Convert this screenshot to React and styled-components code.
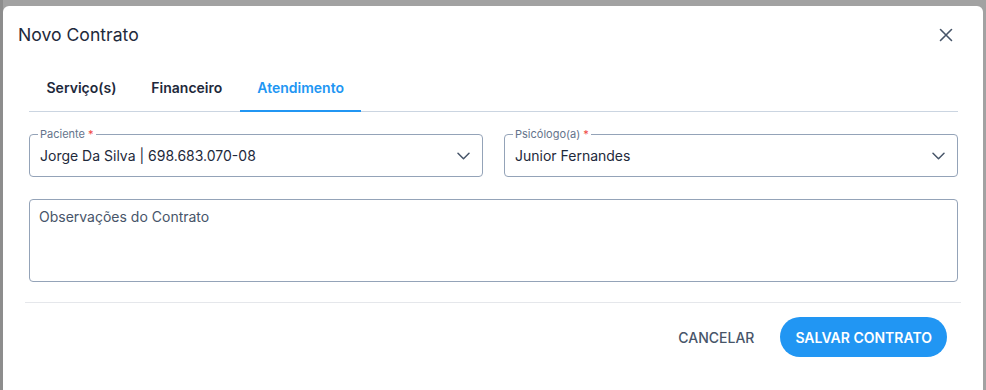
import React from 'react';
import styled, { createGlobalStyle } from 'styled-components';

const GlobalStyle = createGlobalStyle`
  * { box-sizing: border-box; }
  html, body {
    margin: 0;
    height: 100%;
    overflow: hidden;
  }
  body {
    font-family: Inter, "Noto Sans", sans-serif;
    background: linear-gradient(to right, #8d8d8d 0, #8d8d8d 3px, #a2a2a2 3px);
    -webkit-font-smoothing: antialiased;
  }
`;

const Backdrop = styled.div`
  height: 100vh;
  padding: 6px 3px 0 3px;
`;

const Modal = styled.div`
  background: #ffffff;
  border-radius: 6px 6px 0 0;
  height: 100%;
  display: flex;
  flex-direction: column;
`;

const Header = styled.div`
  display: flex;
  align-items: center;
  justify-content: space-between;
  padding: 16px 24px 0 15px;
`;

const Title = styled.h2`
  margin: 0;
  font-size: 17.6px;
  line-height: 26px;
  font-weight: 400;
  color: #1e293b;
`;

const CloseButton = styled.button`
  display: flex;
  align-items: center;
  justify-content: center;
  width: 26px;
  height: 26px;
  padding: 0;
  border: none;
  background: transparent;
  color: #475569;
  cursor: pointer;
`;

const Body = styled.div`
  padding: 0 25px 0 26px;
`;

const TabList = styled.div`
  display: flex;
  margin-top: 16px;
  border-bottom: 1px solid #cbd5e1;
`;

const Tab = styled.button`
  height: 48px;
  margin-bottom: -1px;
  padding: 0 17.5px;
  border: none;
  border-bottom: 2px solid ${props => (props.active ? '#2196f3' : 'transparent')};
  background: transparent;
  font-family: inherit;
  font-size: 14px;
  font-weight: 600;
  color: ${props => (props.active ? '#2196f3' : '#1e293b')};
  cursor: pointer;
`;

const FieldGrid = styled.div`
  display: grid;
  grid-template-columns: 1fr 1fr;
  gap: 21px;
  margin-top: 22px;
`;

const SelectBox = styled.div`
  position: relative;
  display: flex;
  align-items: center;
  justify-content: space-between;
  height: 43px;
  padding: 0 12px 0 10px;
  border: 1px solid #94a3b8;
  border-radius: 4px;
  color: #1e293b;
  font-size: 14px;
  cursor: pointer;
`;

const FloatingLabel = styled.span`
  position: absolute;
  top: -8px;
  left: 8px;
  padding: 0 2px;
  background: #ffffff;
  font-size: 11px;
  line-height: 14px;
  color: #64748b;
`;

const Required = styled.span`
  color: #ef4444;
`;

const Notes = styled.textarea`
  display: block;
  width: 100%;
  height: 83px;
  margin-top: 22px;
  padding: 8px 9px;
  border: 1px solid #94a3b8;
  border-radius: 4px;
  resize: none;
  font-family: inherit;
  font-size: 14px;
  line-height: 18px;
  color: #1e293b;

  &::placeholder {
    color: #475569;
  }
`;

const Divider = styled.hr`
  margin: 20px 22px 0 22px;
  border: none;
  border-top: 1px solid #e5e7eb;
`;

const Footer = styled.div`
  display: flex;
  justify-content: flex-end;
  align-items: center;
  gap: 10px;
  padding: 14px 36px 0 0;
`;

const TextButton = styled.button`
  height: 40px;
  padding: 0 16px;
  border: none;
  background: transparent;
  font-family: inherit;
  font-size: 14px;
  font-weight: 500;
  color: #475569;
  cursor: pointer;
`;

const PrimaryButton = styled.button`
  height: 40px;
  padding: 0 15px;
  border: none;
  border-radius: 20px;
  background: #2196f3;
  font-family: inherit;
  font-size: 14px;
  font-weight: 600;
  color: #ffffff;
  cursor: pointer;
`;

const XIcon = () => (
  <svg width="14" height="14" viewBox="0 0 14 14" fill="none" stroke="currentColor" strokeWidth="1.6" strokeLinecap="round">
    <path d="M1.5 1.5 L12.5 12.5 M12.5 1.5 L1.5 12.5" />
  </svg>
);

const Chevron = () => (
  <svg width="13" height="8" viewBox="0 0 13 8" fill="none" stroke="#475569" strokeWidth="1.5" strokeLinecap="round" strokeLinejoin="round">
    <path d="M1 1.2 L6.5 6.7 L12 1.2" />
  </svg>
);

const SelectField = ({ label, value }) => (
  <SelectBox>
    <FloatingLabel>
      {label} <Required>*</Required>
    </FloatingLabel>
    <span>{value}</span>
    <Chevron />
  </SelectBox>
);

export default function App() {
  return (
    <>
      <GlobalStyle />
      <Backdrop>
        <Modal>
          <Header>
            <Title>Novo Contrato</Title>
            <CloseButton aria-label="Fechar">
              <XIcon />
            </CloseButton>
          </Header>
          <Body>
            <TabList>
              <Tab>Serviço(s)</Tab>
              <Tab>Financeiro</Tab>
              <Tab active>Atendimento</Tab>
            </TabList>
            <FieldGrid>
              <SelectField label="Paciente" value="Jorge Da Silva | 698.683.070-08" />
              <SelectField label="Psicólogo(a)" value="Junior Fernandes" />
            </FieldGrid>
            <Notes placeholder="Observações do Contrato" />
          </Body>
          <Divider />
          <Footer>
            <TextButton>CANCELAR</TextButton>
            <PrimaryButton>SALVAR CONTRATO</PrimaryButton>
          </Footer>
        </Modal>
      </Backdrop>
    </>
  );
}
